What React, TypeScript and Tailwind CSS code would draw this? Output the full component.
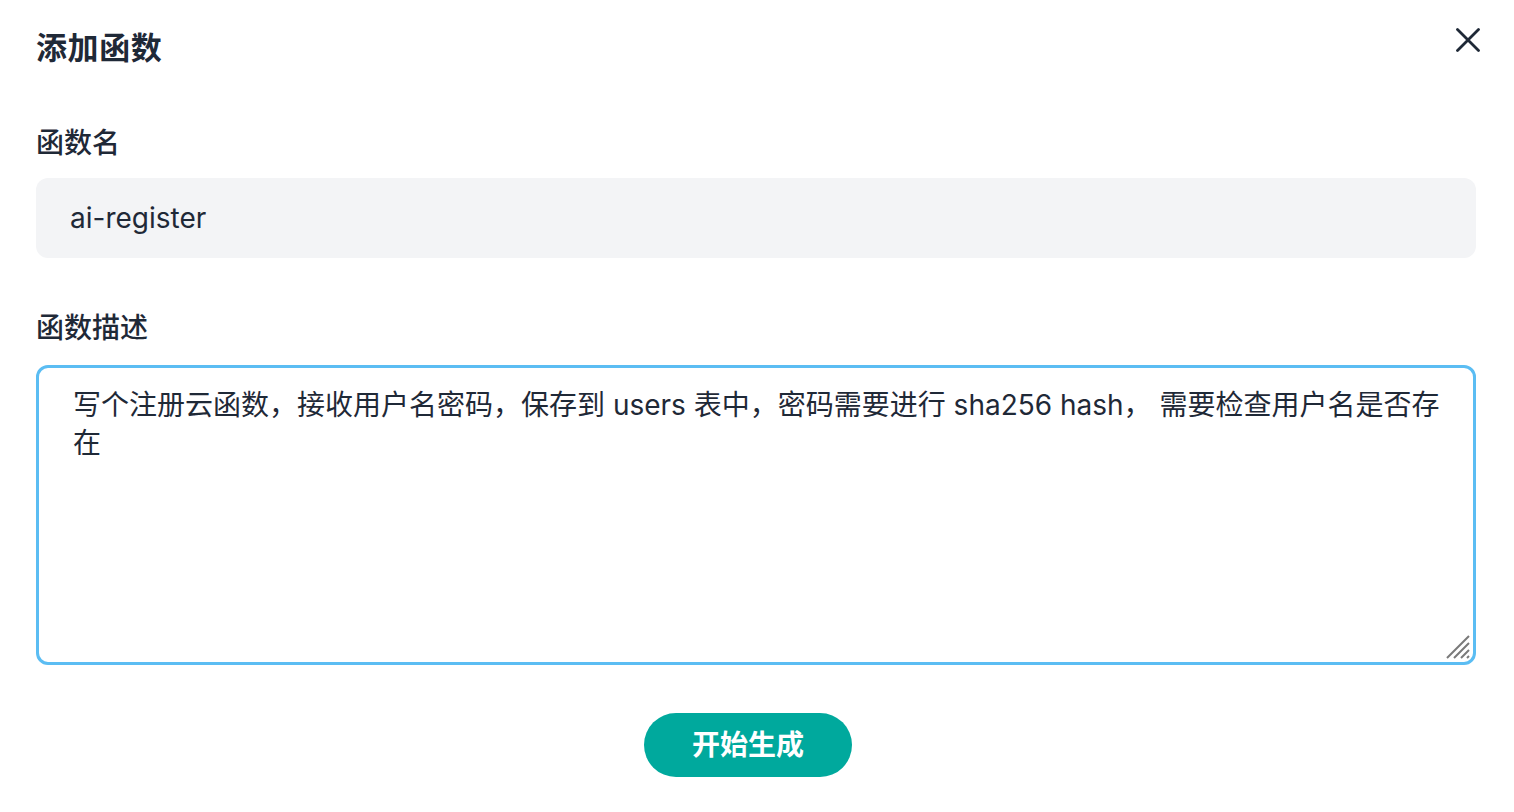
import React from "react";

export default function App() {
  const font = { fontFamily: '"Inter", "Noto Sans CJK SC", sans-serif' };
  return (
    <main className="min-h-screen bg-white text-[#1f2937]" style={font}>
      <div className="pl-[36px] pr-[38px] pt-[29px]">
        {/* Header */}
        <div className="flex items-start justify-between">
          <h2 className="mt-[-3px] text-[31px] font-bold leading-[44px] tracking-[0.6px]">添加函数</h2>
          <button className="mt-[-1px] mr-[-4px] w-[24px] h-[24px] flex items-center justify-center text-[#1f2937]">
            <svg width="24" height="24" viewBox="0 0 24 24" fill="none" stroke="currentColor" strokeWidth="2.8" strokeLinecap="round">
              <path d="M1.5 1.5 L22.5 22.5 M22.5 1.5 L1.5 22.5" />
            </svg>
          </button>
        </div>

        {/* Name */}
        <label className="block mt-[53px] text-[28px] font-medium leading-[40px]">函数名</label>
        <div className="mt-[15px] h-[80px] rounded-[12px] bg-[#f3f4f6] flex items-center px-[34px] text-[28px]">
          ai-register
        </div>

        {/* Description */}
        <label className="block mt-[50px] text-[28px] font-medium leading-[40px]">函数描述</label>
        <div className="relative mt-[17px]">
          <textarea
            className="block w-full h-[300px] resize-none rounded-[12px] border-[3px] border-[#5bbdf3] pl-[34px] pr-[30px] py-[18px] text-[28px] leading-[38px] outline-none"
            style={font}
            defaultValue="写个注册云函数，接收用户名密码，保存到 users 表中，密码需要进行 sha256 hash， 需要检查用户名是否存在"
          />
          <svg className="absolute right-[5px] bottom-[5px] pointer-events-none" width="26" height="26" viewBox="0 0 26 26" stroke="#7a7a7a" strokeWidth="2">
            <path d="M2 24 L24 2 M9 24 L24 9 M16 24 L24 16 M22 24 L24 22" />
          </svg>
        </div>

        {/* Action */}
        <div className="flex justify-center mt-[48px] pr-[16px]">
          <button className="w-[208px] h-[64px] rounded-full bg-[#00a99d] text-white text-[28px] font-semibold">
            开始生成
          </button>
        </div>
      </div>
    </main>
  );
}
